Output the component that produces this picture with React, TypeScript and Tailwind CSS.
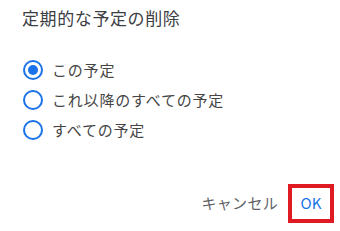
import React from 'react';

const options = ['この予定', 'これ以降のすべての予定', 'すべての予定'];

const Radio: React.FC<{ checked?: boolean }> = ({ checked }) => (
    <span className="w-[20px] h-[20px] rounded-full border-[2px] border-[#1a73e8] flex items-center justify-center shrink-0">
        {checked && <span className="w-[10px] h-[10px] rounded-full bg-[#1a73e8]"></span>}
    </span>
);

const App: React.FC = () => {
    return (
        <div
            className="w-[340px] h-[231px] bg-white text-[#3c4043] flex flex-col"
            style={{ fontFamily: '"Noto Sans CJK JP", "Noto Sans", sans-serif' }}
        >
            <div className="pl-[22px] pt-[6px] text-[17px] tracking-[0.6px] leading-[24px] text-[#3c4043]">定期的な予定の削除</div>

            <div className="pl-[23px] mt-[30px] flex flex-col gap-[10px]">
                {options.map((o, i) => (
                    <label key={o} className="flex items-center gap-[9px] h-[20px]">
                        <Radio checked={i === 0} />
                        <span className="text-[15px] tracking-[0.8px] leading-[20px] text-[#454545]">{o}</span>
                    </label>
                ))}
            </div>

            <div className="mt-auto mb-[8px] pr-[6px] flex items-center justify-end gap-[10px]">
                <span className="text-[15px] tracking-[0.3px] text-[#5f6368]">キャンセル</span>
                <span className="w-[46px] h-[39px] border-[4px] border-[#e01a22] flex items-center justify-center text-[15px] text-[#1a73e8]">OK</span>
            </div>
        </div>
    );
};

export default App;
